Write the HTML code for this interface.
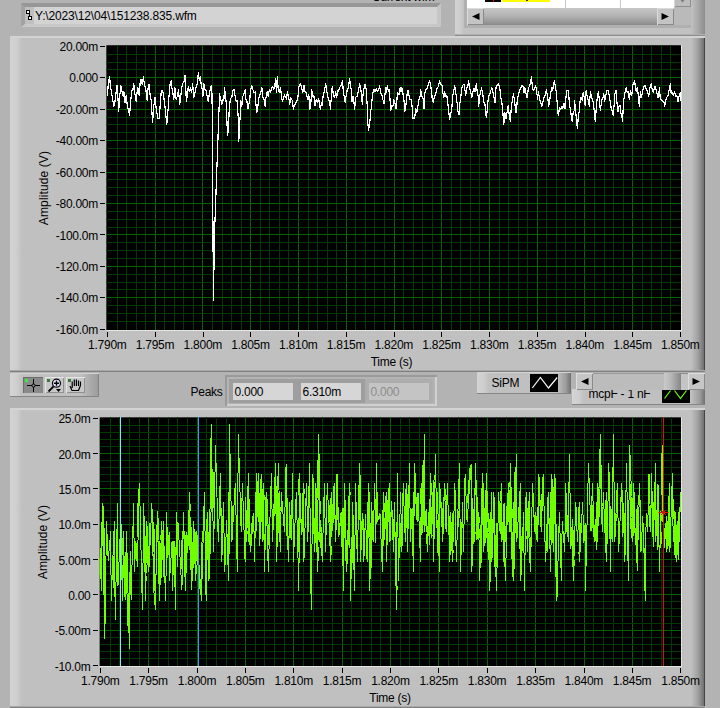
<!DOCTYPE html>
<html><head><meta charset="utf-8"><title>Waveform viewer</title>
<style>
html,body{margin:0;padding:0;}
body{width:720px;height:708px;overflow:hidden;background:#b3b3b3;font-family:"Liberation Sans", sans-serif;font-size:12px;color:#111;position:relative;}
.abs{position:absolute;}
.lbl{position:absolute;white-space:nowrap;line-height:14px;height:14px;font-size:12px;letter-spacing:-0.25px;color:#000;}
.r{text-align:right;}
.c{text-align:center;}
.panel{position:absolute;background:#c4c4c4;}
svg{position:absolute;left:0;top:0;}
</style></head><body>

<div class="abs" style="left:21px;top:3px;width:412px;height:17px;background:#d3d3d3;border-style:solid;border-width:4px 4px 3px 4px;border-color:#979797 #c6c6c6 #c8c8c8 #a2a2a2;"></div>
<div class="abs" style="left:25px;top:7px;width:9px;height:17px;background:#bfbfbf;"></div>
<svg width="40" height="30" style="left:0;top:0"><g fill="#fff" stroke="#000" stroke-width="1" shape-rendering="crispEdges"><rect x="26.5" y="10.5" width="3" height="3"/><rect x="28.5" y="16.5" width="3" height="3"/><path d="M29.500 14v2" fill="none"/></g></svg>
<div class="lbl" style="left:35px;top:9px;letter-spacing:-0.16px;">Y:\2023\12\04\151238.835.wfm</div>
<div class="lbl" style="left:372px;top:-10px;">Current wfm</div>

<div class="abs" style="left:455px;top:-12px;width:250px;height:48px;background:linear-gradient(90deg,#d3d3d3 0,#cecece 5px,#c2c2c2 9px,#c2c2c2 236px,#a8a8a8 243px,#8c8c8c 250px);box-shadow:inset 0 -1px 0 #8e8e8e, inset 0 -2px 0 #b0b0b0;"></div>
<div class="abs" style="left:464px;top:-6px;width:227px;height:34px;background:#b0b0b0;"></div>
<div class="abs" style="left:467px;top:0;width:224px;height:25px;background:#bababa;"></div>
<div class="abs" style="left:467px;top:0;width:207px;height:8px;background:#fff;"></div>
<div class="abs" style="left:485px;top:0;width:16px;height:2px;background:#000;"></div>
<div class="abs" style="left:493px;top:0;width:1px;height:2px;background:#e00;"></div>
<div class="abs" style="left:502px;top:0;width:48px;height:2px;background:#ffff00;"></div>
<div class="abs" style="left:526px;top:0;width:2px;height:1px;background:#333;"></div>
<div class="abs" style="left:565px;top:0;width:1px;height:8px;background:#c8c8c8;"></div>
<div class="abs" style="left:620px;top:0;width:1px;height:8px;background:#c8c8c8;"></div>
<div class="abs" style="left:674px;top:-4px;width:17px;height:11px;background:#bdbdbd;box-shadow:inset 1px 0 0 #d6d6d6, inset -1px -1px 0 #8e8e8e;"></div>
<div class="abs" style="left:467px;top:8px;width:207px;height:17px;background:linear-gradient(#c6c6c6,#b4b4b4 45%,#8a8a8a);"></div>
<div class="abs" style="left:467px;top:8px;width:17px;height:17px;background:#c4c4c4;box-shadow:inset 1px 1px 0 #dcdcdc, inset -1px -1px 0 #8a8a8a;"></div>
<div class="abs" style="left:657px;top:8px;width:17px;height:17px;background:#c4c4c4;box-shadow:inset 1px 1px 0 #dcdcdc, inset -1px -1px 0 #8a8a8a;"></div>
<svg width="720" height="40"><path d="M479.500 13v7l-7.500-3.500z M661.500 13v7l7.500-3.500z " fill="#000"/><path d="M680.500 0h4l-2 2.500z" fill="#7a7a7a"/></svg>

<div class="panel" style="left:10px;top:36px;width:695px;height:336px;background:linear-gradient(90deg,#d3d3d3 0,#cecece 7px,#c0c0c0 12px,#c0c0c0 681px,#a0a0a0 688px,#707070 694px,#444 694px,#444 695px);box-shadow:inset 0 2px 0 #d3d3d3, inset 0 -1px 0 #808080, inset 0 -2px 0 #a8a8a8;"></div>
<div class="panel" style="left:10px;top:408px;width:695px;height:300px;background:linear-gradient(90deg,#d3d3d3 0,#cecece 7px,#c0c0c0 12px,#c0c0c0 681px,#a0a0a0 688px,#707070 694px,#444 694px,#444 695px);box-shadow:inset 0 2px 0 #d3d3d3, inset 0 -1px 0 #808080, inset 0 -2px 0 #a8a8a8;"></div>
<div class="lbl r" style="left:28px;width:70px;top:39.8px;">20.00m</div>
<div class="abs" style="left:100px;top:46px;width:5px;height:1px;background:#000;"></div>
<div class="lbl r" style="left:28px;width:70px;top:71.2px;">0.000</div>
<div class="abs" style="left:100px;top:77px;width:5px;height:1px;background:#000;"></div>
<div class="lbl r" style="left:28px;width:70px;top:102.7px;">-20.00m</div>
<div class="abs" style="left:100px;top:109px;width:5px;height:1px;background:#000;"></div>
<div class="lbl r" style="left:28px;width:70px;top:134.1px;">-40.00m</div>
<div class="abs" style="left:100px;top:140px;width:5px;height:1px;background:#000;"></div>
<div class="lbl r" style="left:28px;width:70px;top:165.6px;">-60.00m</div>
<div class="abs" style="left:100px;top:172px;width:5px;height:1px;background:#000;"></div>
<div class="lbl r" style="left:28px;width:70px;top:197.0px;">-80.00m</div>
<div class="abs" style="left:100px;top:203px;width:5px;height:1px;background:#000;"></div>
<div class="lbl r" style="left:28px;width:70px;top:228.5px;">-100.0m</div>
<div class="abs" style="left:100px;top:234px;width:5px;height:1px;background:#000;"></div>
<div class="lbl r" style="left:28px;width:70px;top:259.9px;">-120.0m</div>
<div class="abs" style="left:100px;top:266px;width:5px;height:1px;background:#000;"></div>
<div class="lbl r" style="left:28px;width:70px;top:291.4px;">-140.0m</div>
<div class="abs" style="left:100px;top:297px;width:5px;height:1px;background:#000;"></div>
<div class="lbl r" style="left:28px;width:70px;top:322.8px;">-160.0m</div>
<div class="abs" style="left:100px;top:329px;width:5px;height:1px;background:#000;"></div>
<div class="lbl c" style="left:77.3px;width:60px;top:338px;">1.790m</div>
<div class="abs" style="left:107px;top:332px;width:1px;height:5px;background:#000;"></div>
<div class="lbl c" style="left:125.0px;width:60px;top:338px;">1.795m</div>
<div class="abs" style="left:155px;top:332px;width:1px;height:5px;background:#000;"></div>
<div class="lbl c" style="left:172.8px;width:60px;top:338px;">1.800m</div>
<div class="abs" style="left:203px;top:332px;width:1px;height:5px;background:#000;"></div>
<div class="lbl c" style="left:220.5px;width:60px;top:338px;">1.805m</div>
<div class="abs" style="left:250px;top:332px;width:1px;height:5px;background:#000;"></div>
<div class="lbl c" style="left:268.3px;width:60px;top:338px;">1.810m</div>
<div class="abs" style="left:298px;top:332px;width:1px;height:5px;background:#000;"></div>
<div class="lbl c" style="left:316.0px;width:60px;top:338px;">1.815m</div>
<div class="abs" style="left:346px;top:332px;width:1px;height:5px;background:#000;"></div>
<div class="lbl c" style="left:363.8px;width:60px;top:338px;">1.820m</div>
<div class="abs" style="left:394px;top:332px;width:1px;height:5px;background:#000;"></div>
<div class="lbl c" style="left:411.5px;width:60px;top:338px;">1.825m</div>
<div class="abs" style="left:441px;top:332px;width:1px;height:5px;background:#000;"></div>
<div class="lbl c" style="left:459.3px;width:60px;top:338px;">1.830m</div>
<div class="abs" style="left:489px;top:332px;width:1px;height:5px;background:#000;"></div>
<div class="lbl c" style="left:507.0px;width:60px;top:338px;">1.835m</div>
<div class="abs" style="left:537px;top:332px;width:1px;height:5px;background:#000;"></div>
<div class="lbl c" style="left:554.8px;width:60px;top:338px;">1.840m</div>
<div class="abs" style="left:585px;top:332px;width:1px;height:5px;background:#000;"></div>
<div class="lbl c" style="left:602.5px;width:60px;top:338px;">1.845m</div>
<div class="abs" style="left:632px;top:332px;width:1px;height:5px;background:#000;"></div>
<div class="lbl c" style="left:650.3px;width:60px;top:338px;">1.850m</div>
<div class="abs" style="left:680px;top:332px;width:1px;height:5px;background:#000;"></div>
<div class="lbl c" style="left:351.5px;width:80px;top:355px;">Time (s)</div>
<div class="lbl r" style="left:20.5px;width:70px;top:412.3px;">25.0m</div>
<div class="abs" style="left:93px;top:418px;width:5px;height:1px;background:#000;"></div>
<div class="lbl r" style="left:20.5px;width:70px;top:447.6px;">20.0m</div>
<div class="abs" style="left:93px;top:453px;width:5px;height:1px;background:#000;"></div>
<div class="lbl r" style="left:20.5px;width:70px;top:482.9px;">15.0m</div>
<div class="abs" style="left:93px;top:488px;width:5px;height:1px;background:#000;"></div>
<div class="lbl r" style="left:20.5px;width:70px;top:518.2px;">10.0m</div>
<div class="abs" style="left:93px;top:524px;width:5px;height:1px;background:#000;"></div>
<div class="lbl r" style="left:20.5px;width:70px;top:553.6px;">5.00m</div>
<div class="abs" style="left:93px;top:559px;width:5px;height:1px;background:#000;"></div>
<div class="lbl r" style="left:20.5px;width:70px;top:588.9px;">0.00</div>
<div class="abs" style="left:93px;top:594px;width:5px;height:1px;background:#000;"></div>
<div class="lbl r" style="left:20.5px;width:70px;top:624.2px;">-5.00m</div>
<div class="abs" style="left:93px;top:630px;width:5px;height:1px;background:#000;"></div>
<div class="lbl r" style="left:20.5px;width:70px;top:659.5px;">-10.0m</div>
<div class="abs" style="left:93px;top:665px;width:5px;height:1px;background:#000;"></div>
<div class="lbl c" style="left:70.3px;width:60px;top:674px;">1.790m</div>
<div class="abs" style="left:100px;top:668px;width:1px;height:5px;background:#000;"></div>
<div class="lbl c" style="left:118.6px;width:60px;top:674px;">1.795m</div>
<div class="abs" style="left:148px;top:668px;width:1px;height:5px;background:#000;"></div>
<div class="lbl c" style="left:167.0px;width:60px;top:674px;">1.800m</div>
<div class="abs" style="left:197px;top:668px;width:1px;height:5px;background:#000;"></div>
<div class="lbl c" style="left:215.3px;width:60px;top:674px;">1.805m</div>
<div class="abs" style="left:245px;top:668px;width:1px;height:5px;background:#000;"></div>
<div class="lbl c" style="left:263.7px;width:60px;top:674px;">1.810m</div>
<div class="abs" style="left:293px;top:668px;width:1px;height:5px;background:#000;"></div>
<div class="lbl c" style="left:312.0px;width:60px;top:674px;">1.815m</div>
<div class="abs" style="left:342px;top:668px;width:1px;height:5px;background:#000;"></div>
<div class="lbl c" style="left:360.4px;width:60px;top:674px;">1.820m</div>
<div class="abs" style="left:390px;top:668px;width:1px;height:5px;background:#000;"></div>
<div class="lbl c" style="left:408.7px;width:60px;top:674px;">1.825m</div>
<div class="abs" style="left:438px;top:668px;width:1px;height:5px;background:#000;"></div>
<div class="lbl c" style="left:457.1px;width:60px;top:674px;">1.830m</div>
<div class="abs" style="left:487px;top:668px;width:1px;height:5px;background:#000;"></div>
<div class="lbl c" style="left:505.4px;width:60px;top:674px;">1.835m</div>
<div class="abs" style="left:535px;top:668px;width:1px;height:5px;background:#000;"></div>
<div class="lbl c" style="left:553.8px;width:60px;top:674px;">1.840m</div>
<div class="abs" style="left:584px;top:668px;width:1px;height:5px;background:#000;"></div>
<div class="lbl c" style="left:602.1px;width:60px;top:674px;">1.845m</div>
<div class="abs" style="left:632px;top:668px;width:1px;height:5px;background:#000;"></div>
<div class="lbl c" style="left:650.5px;width:60px;top:674px;">1.850m</div>
<div class="abs" style="left:680px;top:668px;width:1px;height:5px;background:#000;"></div>
<div class="lbl c" style="left:350.1px;width:80px;top:691px;">Time (s)</div>
<div class="lbl c" style="left:-6.299999999999997px;top:181.3px;width:100px;transform:rotate(-90deg);letter-spacing:0.12px;">Amplitude (V)</div>
<div class="lbl c" style="left:-7px;top:534.9px;width:100px;transform:rotate(-90deg);letter-spacing:0.12px;">Amplitude (V)</div>
<svg width="720" height="708" viewBox="0 0 720 708">
<rect x="106.3" y="45.2" width="575.7" height="285.8" fill="#e4e4e4"/>
<rect x="106.3" y="45.2" width="574.7" height="284.8" fill="#000"/>
<g shape-rendering="crispEdges" stroke-width="1"><line x1="117.5" y1="45.2" x2="117.5" y2="330" stroke="#003a00"/>
<line x1="126.5" y1="45.2" x2="126.5" y2="330" stroke="#003a00"/>
<line x1="136.5" y1="45.2" x2="136.5" y2="330" stroke="#003a00"/>
<line x1="145.5" y1="45.2" x2="145.5" y2="330" stroke="#003a00"/>
<line x1="155.5" y1="45.2" x2="155.5" y2="330" stroke="#006400"/>
<line x1="164.5" y1="45.2" x2="164.5" y2="330" stroke="#003a00"/>
<line x1="174.5" y1="45.2" x2="174.5" y2="330" stroke="#003a00"/>
<line x1="183.5" y1="45.2" x2="183.5" y2="330" stroke="#003a00"/>
<line x1="193.5" y1="45.2" x2="193.5" y2="330" stroke="#003a00"/>
<line x1="202.5" y1="45.2" x2="202.5" y2="330" stroke="#006400"/>
<line x1="212.5" y1="45.2" x2="212.5" y2="330" stroke="#003a00"/>
<line x1="222.5" y1="45.2" x2="222.5" y2="330" stroke="#003a00"/>
<line x1="231.5" y1="45.2" x2="231.5" y2="330" stroke="#003a00"/>
<line x1="241.5" y1="45.2" x2="241.5" y2="330" stroke="#003a00"/>
<line x1="250.5" y1="45.2" x2="250.5" y2="330" stroke="#006400"/>
<line x1="260.5" y1="45.2" x2="260.5" y2="330" stroke="#003a00"/>
<line x1="269.5" y1="45.2" x2="269.5" y2="330" stroke="#003a00"/>
<line x1="279.5" y1="45.2" x2="279.5" y2="330" stroke="#003a00"/>
<line x1="288.5" y1="45.2" x2="288.5" y2="330" stroke="#003a00"/>
<line x1="298.5" y1="45.2" x2="298.5" y2="330" stroke="#006400"/>
<line x1="308.5" y1="45.2" x2="308.5" y2="330" stroke="#003a00"/>
<line x1="317.5" y1="45.2" x2="317.5" y2="330" stroke="#003a00"/>
<line x1="327.5" y1="45.2" x2="327.5" y2="330" stroke="#003a00"/>
<line x1="336.5" y1="45.2" x2="336.5" y2="330" stroke="#003a00"/>
<line x1="346.5" y1="45.2" x2="346.5" y2="330" stroke="#006400"/>
<line x1="355.5" y1="45.2" x2="355.5" y2="330" stroke="#003a00"/>
<line x1="365.5" y1="45.2" x2="365.5" y2="330" stroke="#003a00"/>
<line x1="374.5" y1="45.2" x2="374.5" y2="330" stroke="#003a00"/>
<line x1="384.5" y1="45.2" x2="384.5" y2="330" stroke="#003a00"/>
<line x1="394.5" y1="45.2" x2="394.5" y2="330" stroke="#006400"/>
<line x1="403.5" y1="45.2" x2="403.5" y2="330" stroke="#003a00"/>
<line x1="413.5" y1="45.2" x2="413.5" y2="330" stroke="#003a00"/>
<line x1="422.5" y1="45.2" x2="422.5" y2="330" stroke="#003a00"/>
<line x1="432.5" y1="45.2" x2="432.5" y2="330" stroke="#003a00"/>
<line x1="441.5" y1="45.2" x2="441.5" y2="330" stroke="#006400"/>
<line x1="451.5" y1="45.2" x2="451.5" y2="330" stroke="#003a00"/>
<line x1="460.5" y1="45.2" x2="460.5" y2="330" stroke="#003a00"/>
<line x1="470.5" y1="45.2" x2="470.5" y2="330" stroke="#003a00"/>
<line x1="479.5" y1="45.2" x2="479.5" y2="330" stroke="#003a00"/>
<line x1="489.5" y1="45.2" x2="489.5" y2="330" stroke="#006400"/>
<line x1="499.5" y1="45.2" x2="499.5" y2="330" stroke="#003a00"/>
<line x1="508.5" y1="45.2" x2="508.5" y2="330" stroke="#003a00"/>
<line x1="518.5" y1="45.2" x2="518.5" y2="330" stroke="#003a00"/>
<line x1="527.5" y1="45.2" x2="527.5" y2="330" stroke="#003a00"/>
<line x1="537.5" y1="45.2" x2="537.5" y2="330" stroke="#006400"/>
<line x1="546.5" y1="45.2" x2="546.5" y2="330" stroke="#003a00"/>
<line x1="556.5" y1="45.2" x2="556.5" y2="330" stroke="#003a00"/>
<line x1="565.5" y1="45.2" x2="565.5" y2="330" stroke="#003a00"/>
<line x1="575.5" y1="45.2" x2="575.5" y2="330" stroke="#003a00"/>
<line x1="584.5" y1="45.2" x2="584.5" y2="330" stroke="#006400"/>
<line x1="594.5" y1="45.2" x2="594.5" y2="330" stroke="#003a00"/>
<line x1="604.5" y1="45.2" x2="604.5" y2="330" stroke="#003a00"/>
<line x1="613.5" y1="45.2" x2="613.5" y2="330" stroke="#003a00"/>
<line x1="623.5" y1="45.2" x2="623.5" y2="330" stroke="#003a00"/>
<line x1="632.5" y1="45.2" x2="632.5" y2="330" stroke="#006400"/>
<line x1="642.5" y1="45.2" x2="642.5" y2="330" stroke="#003a00"/>
<line x1="651.5" y1="45.2" x2="651.5" y2="330" stroke="#003a00"/>
<line x1="661.5" y1="45.2" x2="661.5" y2="330" stroke="#003a00"/>
<line x1="670.5" y1="45.2" x2="670.5" y2="330" stroke="#003a00"/>
<line x1="106.3" y1="54.5" x2="681" y2="54.5" stroke="#003a00"/>
<line x1="106.3" y1="62.5" x2="681" y2="62.5" stroke="#003a00"/>
<line x1="106.3" y1="69.5" x2="681" y2="69.5" stroke="#003a00"/>
<line x1="106.3" y1="77.5" x2="681" y2="77.5" stroke="#006400"/>
<line x1="106.3" y1="85.5" x2="681" y2="85.5" stroke="#003a00"/>
<line x1="106.3" y1="93.5" x2="681" y2="93.5" stroke="#003a00"/>
<line x1="106.3" y1="101.5" x2="681" y2="101.5" stroke="#003a00"/>
<line x1="106.3" y1="109.5" x2="681" y2="109.5" stroke="#006400"/>
<line x1="106.3" y1="117.5" x2="681" y2="117.5" stroke="#003a00"/>
<line x1="106.3" y1="124.5" x2="681" y2="124.5" stroke="#003a00"/>
<line x1="106.3" y1="132.5" x2="681" y2="132.5" stroke="#003a00"/>
<line x1="106.3" y1="140.5" x2="681" y2="140.5" stroke="#006400"/>
<line x1="106.3" y1="148.5" x2="681" y2="148.5" stroke="#003a00"/>
<line x1="106.3" y1="156.5" x2="681" y2="156.5" stroke="#003a00"/>
<line x1="106.3" y1="164.5" x2="681" y2="164.5" stroke="#003a00"/>
<line x1="106.3" y1="172.5" x2="681" y2="172.5" stroke="#006400"/>
<line x1="106.3" y1="179.5" x2="681" y2="179.5" stroke="#003a00"/>
<line x1="106.3" y1="187.5" x2="681" y2="187.5" stroke="#003a00"/>
<line x1="106.3" y1="195.5" x2="681" y2="195.5" stroke="#003a00"/>
<line x1="106.3" y1="203.5" x2="681" y2="203.5" stroke="#006400"/>
<line x1="106.3" y1="211.5" x2="681" y2="211.5" stroke="#003a00"/>
<line x1="106.3" y1="219.5" x2="681" y2="219.5" stroke="#003a00"/>
<line x1="106.3" y1="227.5" x2="681" y2="227.5" stroke="#003a00"/>
<line x1="106.3" y1="234.5" x2="681" y2="234.5" stroke="#006400"/>
<line x1="106.3" y1="242.5" x2="681" y2="242.5" stroke="#003a00"/>
<line x1="106.3" y1="250.5" x2="681" y2="250.5" stroke="#003a00"/>
<line x1="106.3" y1="258.5" x2="681" y2="258.5" stroke="#003a00"/>
<line x1="106.3" y1="266.5" x2="681" y2="266.5" stroke="#006400"/>
<line x1="106.3" y1="274.5" x2="681" y2="274.5" stroke="#003a00"/>
<line x1="106.3" y1="282.5" x2="681" y2="282.5" stroke="#003a00"/>
<line x1="106.3" y1="289.5" x2="681" y2="289.5" stroke="#003a00"/>
<line x1="106.3" y1="297.5" x2="681" y2="297.5" stroke="#006400"/>
<line x1="106.3" y1="305.5" x2="681" y2="305.5" stroke="#003a00"/>
<line x1="106.3" y1="313.5" x2="681" y2="313.5" stroke="#003a00"/>
<line x1="106.3" y1="321.5" x2="681" y2="321.5" stroke="#003a00"/></g>
<polyline points="107.3,96.2 108.4,82.9 109.6,76.8 110.4,86.2 111.6,92.9 112.7,99.6 113.8,106.2 114.9,101.8 116.0,92.9 117.1,85.1 117.9,97.3 118.7,111.2 119.6,97.3 120.9,85.7 121.8,90.7 123.1,96.2 124.0,91.8 125.1,102.9 126.2,95.1 127.3,106.2 128.2,109.6 129.6,115.1 130.7,100.7 131.8,90.7 132.9,89.6 133.8,84.0 134.6,91.8 136.2,101.8 137.1,91.8 137.9,87.9 139.3,95.7 140.1,82.9 141.2,79.0 142.3,84.6 143.4,76.8 144.6,85.7 145.7,88.4 147.1,100.1 147.9,89.6 149.0,84.0 149.8,92.9 151.2,100.7 152.6,122.3 153.7,107.3 154.9,97.3 156.2,108.4 157.9,119.0 159.2,118.4 160.1,106.2 161.2,91.8 162.1,90.1 163.4,94.0 164.9,106.2 166.0,117.3 166.8,124.6 167.9,111.8 169.0,96.2 170.1,84.0 171.2,80.7 172.0,88.4 172.9,92.9 173.8,99.6 174.9,87.9 176.2,99.6 177.3,96.2 178.4,90.1 179.8,104.0 180.9,95.1 182.0,86.2 183.4,81.8 184.0,81.8 184.9,75.1 185.7,86.2 186.4,101.8 187.6,91.8 188.4,86.2 189.3,91.8 190.4,87.9 191.6,92.9 192.7,84.0 193.8,97.3 194.9,92.9 196.0,87.3 197.1,84.0 198.4,72.9 199.3,80.7 200.4,76.8 201.2,85.1 202.3,89.6 202.9,96.2 203.8,84.0 205.1,89.6 206.2,90.7 207.1,96.2 208.2,101.8 209.3,94.0 210.4,88.4 211.3,85.7 212.0,94.0 212.3,119.6 213.4,300.0 214.6,230.7 218.8,115.1 219.6,94.0 220.7,99.6 221.8,104.0 223.1,99.6 223.8,100.7 224.6,87.3 225.3,95.1 226.2,102.9 227.1,126.2 227.7,135.1 228.4,128.4 229.3,108.4 230.4,98.4 231.8,97.3 232.9,90.7 234.0,89.6 235.1,96.2 236.2,101.8 237.1,100.7 238.2,117.3 238.8,141.4 239.3,130.7 240.1,117.3 240.9,100.7 241.8,106.2 242.9,96.2 244.0,94.0 245.1,89.6 246.0,99.6 246.8,100.7 247.9,109.0 249.6,100.7 250.7,89.6 251.8,85.7 252.9,89.6 254.0,92.9 255.1,91.8 256.0,105.1 256.8,112.9 257.9,106.2 259.0,97.3 260.7,92.9 261.8,87.3 262.9,97.3 264.0,99.6 265.1,106.2 266.0,97.3 267.1,91.8 268.2,96.2 269.3,89.6 270.4,92.9 271.6,87.9 272.7,86.2 273.8,89.6 274.9,85.1 275.7,78.4 276.4,92.9 277.3,76.8 278.2,89.6 279.3,92.9 280.4,87.9 281.6,96.2 282.3,101.8 283.4,98.4 284.6,95.1 285.7,97.3 286.6,99.6 287.3,91.8 288.4,96.2 289.8,104.0 290.7,97.3 292.3,100.7 293.4,109.0 294.6,105.1 295.7,102.9 296.8,101.8 297.9,97.3 299.0,86.2 300.4,83.4 301.8,88.4 302.7,92.9 304.0,85.7 305.1,91.8 306.2,92.9 307.9,99.6 308.8,94.6 309.8,109.0 310.7,106.2 311.6,89.6 312.7,96.2 313.8,95.1 315.1,105.7 316.2,99.6 317.3,102.3 318.7,98.4 319.6,105.1 320.4,109.0 321.6,102.9 322.3,105.1 323.1,96.2 324.6,89.6 325.7,84.0 326.8,91.8 328.4,99.6 329.6,101.8 330.4,109.0 331.4,96.2 332.3,86.2 333.4,95.1 334.6,97.3 335.7,91.8 336.8,97.3 337.3,90.7 338.4,91.8 339.6,87.9 341.2,85.1 342.6,80.7 343.4,94.0 344.0,95.1 345.1,102.3 346.2,95.1 347.3,89.6 348.4,88.4 349.6,78.4 350.4,86.2 351.6,90.7 352.0,101.8 352.9,96.2 353.8,100.7 354.6,109.0 355.7,97.3 357.1,96.2 358.2,91.8 359.6,84.0 360.7,88.4 361.6,95.1 362.3,104.0 363.4,90.7 365.1,84.0 366.2,89.6 367.1,104.0 367.9,124.0 368.7,130.1 369.8,121.8 370.9,110.7 371.8,101.8 372.9,92.9 374.0,89.6 375.1,91.8 376.2,88.4 377.3,91.8 378.4,90.7 379.6,85.7 380.7,92.9 381.8,94.0 382.9,99.6 384.0,104.0 384.9,95.1 385.7,87.9 386.4,92.9 387.3,85.7 388.4,91.8 389.3,89.6 390.1,100.7 390.7,110.7 391.8,105.1 392.9,106.2 393.8,99.6 394.9,102.9 396.2,109.0 397.1,97.3 397.9,92.9 399.0,95.1 400.1,87.9 400.9,91.8 401.8,87.9 402.9,92.9 404.0,100.7 404.9,111.2 406.0,104.0 406.8,96.2 407.9,90.1 409.0,95.1 410.1,99.6 411.2,99.6 412.3,108.4 413.1,119.0 414.6,118.4 415.7,108.4 416.8,112.9 417.9,106.2 419.0,99.6 420.1,96.2 420.7,89.6 421.8,96.2 423.1,98.4 424.0,109.0 424.9,92.9 426.0,89.6 427.3,87.9 428.4,84.0 429.6,80.7 430.7,86.2 431.6,91.8 432.3,99.6 433.1,102.3 434.2,97.3 435.7,94.0 437.1,88.4 438.4,86.2 439.6,80.7 440.7,84.0 442.0,85.1 442.9,92.9 443.8,97.3 444.6,91.8 445.7,96.2 446.8,95.1 447.9,104.0 448.7,111.8 449.8,119.0 450.9,112.9 451.8,108.4 452.7,96.2 453.8,90.7 454.6,85.7 455.7,91.8 456.8,100.7 457.9,110.7 459.0,115.1 459.8,104.0 460.9,96.2 461.8,87.9 462.9,85.1 464.0,84.0 464.9,89.6 465.7,95.1 466.8,87.9 467.9,85.7 468.7,80.7 469.6,88.4 470.7,91.8 471.8,97.3 472.9,91.8 474.0,88.4 475.1,91.8 476.2,84.0 477.3,91.8 478.1,96.2 478.7,106.2 479.6,96.2 480.7,91.8 481.6,87.9 482.7,94.0 483.8,101.8 484.9,104.0 485.7,112.9 486.4,117.3 487.6,106.2 488.4,96.2 489.8,94.0 490.7,90.7 491.8,87.9 492.9,91.8 494.0,97.3 495.1,102.9 496.0,87.3 497.3,84.6 498.7,84.0 499.8,87.9 500.7,97.3 501.8,101.8 502.9,112.9 503.8,124.6 504.0,121.8 504.9,112.9 506.0,118.4 507.1,111.8 508.2,105.1 509.0,112.9 510.4,121.8 511.2,108.4 512.3,100.7 513.4,94.0 514.6,100.7 515.7,111.8 516.4,112.9 517.3,99.6 518.4,95.1 519.6,90.7 520.7,88.4 521.8,85.7 523.1,86.2 524.0,92.9 524.9,87.9 526.0,94.0 527.1,97.9 528.2,89.6 529.6,85.1 530.7,82.9 531.4,76.8 532.3,86.2 533.4,90.7 534.6,87.9 535.7,85.7 536.8,92.9 537.6,99.6 538.4,91.8 539.6,98.4 540.7,102.9 541.8,106.2 542.9,101.8 544.0,97.3 545.3,95.1 546.4,90.1 547.6,96.2 548.7,106.2 549.6,101.8 550.4,95.1 551.6,87.9 552.7,90.7 553.4,84.0 554.6,80.7 555.3,87.3 556.2,91.8 557.1,101.8 557.9,112.9 558.4,115.1 559.6,107.3 560.7,109.6 561.8,106.2 562.9,108.4 564.0,103.4 565.1,108.4 566.0,97.3 566.8,90.1 568.4,90.1 569.3,101.8 570.4,110.7 571.6,117.3 572.3,121.8 573.1,112.9 574.2,110.7 574.6,100.7 575.7,111.8 576.8,121.8 577.3,128.4 578.2,118.4 579.3,110.7 580.1,100.7 581.2,97.3 582.3,100.7 583.1,92.9 584.0,96.2 585.1,105.1 586.2,90.1 587.3,97.3 588.4,100.7 589.3,106.2 590.4,91.8 591.6,97.3 592.9,100.7 594.0,108.4 595.3,121.8 596.2,108.4 597.3,97.3 598.4,91.8 599.3,99.6 600.4,110.7 601.6,100.7 602.7,98.4 603.8,94.0 604.6,101.8 605.7,96.2 606.8,90.1 607.9,90.1 609.0,94.0 610.1,100.7 611.2,108.4 612.3,111.8 613.1,115.1 614.0,106.2 614.9,94.0 616.2,90.1 616.8,100.7 617.9,111.8 619.0,106.2 620.1,105.1 620.9,112.9 621.8,115.1 622.6,121.8 623.4,102.9 624.6,94.0 626.2,87.9 627.3,92.9 628.4,91.8 629.3,99.6 630.4,90.7 631.8,95.1 632.9,85.1 634.6,80.7 635.3,86.2 636.2,91.8 637.1,87.9 638.2,94.0 639.3,106.2 640.4,91.8 641.6,97.3 642.7,90.7 644.0,86.2 645.3,85.7 646.4,89.6 647.6,91.8 648.7,96.2 649.8,87.9 651.2,84.0 652.3,89.6 653.4,92.9 654.6,86.2 655.7,87.9 656.8,92.9 657.9,97.9 658.7,94.0 659.6,87.3 660.1,97.3 661.2,99.6 662.3,100.7 664.0,102.3 664.6,106.2 665.7,100.7 666.8,97.3 667.9,96.2 669.0,90.7 670.4,84.0 671.2,94.0 672.3,92.9 673.4,95.1 674.6,91.8 675.7,96.2 676.8,95.1 677.9,101.8 679.0,96.2 680.1,92.9 680.9,100.7" fill="none" stroke="#ffffff" stroke-width="1.2" stroke-linejoin="round" shape-rendering="crispEdges"/>
<rect x="99.6" y="417.3" width="582.4" height="249.7" fill="#e4e4e4"/>
<rect x="99.6" y="417.3" width="581.4" height="248.7" fill="#000"/>
<g shape-rendering="crispEdges" stroke-width="1"><line x1="110.5" y1="417.3" x2="110.5" y2="666" stroke="#003a00"/>
<line x1="119.5" y1="417.3" x2="119.5" y2="666" stroke="#003a00"/>
<line x1="129.5" y1="417.3" x2="129.5" y2="666" stroke="#003a00"/>
<line x1="139.5" y1="417.3" x2="139.5" y2="666" stroke="#003a00"/>
<line x1="148.5" y1="417.3" x2="148.5" y2="666" stroke="#006400"/>
<line x1="158.5" y1="417.3" x2="158.5" y2="666" stroke="#003a00"/>
<line x1="168.5" y1="417.3" x2="168.5" y2="666" stroke="#003a00"/>
<line x1="177.5" y1="417.3" x2="177.5" y2="666" stroke="#003a00"/>
<line x1="187.5" y1="417.3" x2="187.5" y2="666" stroke="#003a00"/>
<line x1="197.5" y1="417.3" x2="197.5" y2="666" stroke="#006400"/>
<line x1="206.5" y1="417.3" x2="206.5" y2="666" stroke="#003a00"/>
<line x1="216.5" y1="417.3" x2="216.5" y2="666" stroke="#003a00"/>
<line x1="226.5" y1="417.3" x2="226.5" y2="666" stroke="#003a00"/>
<line x1="235.5" y1="417.3" x2="235.5" y2="666" stroke="#003a00"/>
<line x1="245.5" y1="417.3" x2="245.5" y2="666" stroke="#006400"/>
<line x1="255.5" y1="417.3" x2="255.5" y2="666" stroke="#003a00"/>
<line x1="264.5" y1="417.3" x2="264.5" y2="666" stroke="#003a00"/>
<line x1="274.5" y1="417.3" x2="274.5" y2="666" stroke="#003a00"/>
<line x1="284.5" y1="417.3" x2="284.5" y2="666" stroke="#003a00"/>
<line x1="293.5" y1="417.3" x2="293.5" y2="666" stroke="#006400"/>
<line x1="303.5" y1="417.3" x2="303.5" y2="666" stroke="#003a00"/>
<line x1="313.5" y1="417.3" x2="313.5" y2="666" stroke="#003a00"/>
<line x1="322.5" y1="417.3" x2="322.5" y2="666" stroke="#003a00"/>
<line x1="332.5" y1="417.3" x2="332.5" y2="666" stroke="#003a00"/>
<line x1="342.5" y1="417.3" x2="342.5" y2="666" stroke="#006400"/>
<line x1="351.5" y1="417.3" x2="351.5" y2="666" stroke="#003a00"/>
<line x1="361.5" y1="417.3" x2="361.5" y2="666" stroke="#003a00"/>
<line x1="371.5" y1="417.3" x2="371.5" y2="666" stroke="#003a00"/>
<line x1="380.5" y1="417.3" x2="380.5" y2="666" stroke="#003a00"/>
<line x1="390.5" y1="417.3" x2="390.5" y2="666" stroke="#006400"/>
<line x1="400.5" y1="417.3" x2="400.5" y2="666" stroke="#003a00"/>
<line x1="409.5" y1="417.3" x2="409.5" y2="666" stroke="#003a00"/>
<line x1="419.5" y1="417.3" x2="419.5" y2="666" stroke="#003a00"/>
<line x1="429.5" y1="417.3" x2="429.5" y2="666" stroke="#003a00"/>
<line x1="438.5" y1="417.3" x2="438.5" y2="666" stroke="#006400"/>
<line x1="448.5" y1="417.3" x2="448.5" y2="666" stroke="#003a00"/>
<line x1="458.5" y1="417.3" x2="458.5" y2="666" stroke="#003a00"/>
<line x1="467.5" y1="417.3" x2="467.5" y2="666" stroke="#003a00"/>
<line x1="477.5" y1="417.3" x2="477.5" y2="666" stroke="#003a00"/>
<line x1="487.5" y1="417.3" x2="487.5" y2="666" stroke="#006400"/>
<line x1="496.5" y1="417.3" x2="496.5" y2="666" stroke="#003a00"/>
<line x1="506.5" y1="417.3" x2="506.5" y2="666" stroke="#003a00"/>
<line x1="516.5" y1="417.3" x2="516.5" y2="666" stroke="#003a00"/>
<line x1="525.5" y1="417.3" x2="525.5" y2="666" stroke="#003a00"/>
<line x1="535.5" y1="417.3" x2="535.5" y2="666" stroke="#006400"/>
<line x1="545.5" y1="417.3" x2="545.5" y2="666" stroke="#003a00"/>
<line x1="554.5" y1="417.3" x2="554.5" y2="666" stroke="#003a00"/>
<line x1="564.5" y1="417.3" x2="564.5" y2="666" stroke="#003a00"/>
<line x1="574.5" y1="417.3" x2="574.5" y2="666" stroke="#003a00"/>
<line x1="584.5" y1="417.3" x2="584.5" y2="666" stroke="#006400"/>
<line x1="593.5" y1="417.3" x2="593.5" y2="666" stroke="#003a00"/>
<line x1="603.5" y1="417.3" x2="603.5" y2="666" stroke="#003a00"/>
<line x1="613.5" y1="417.3" x2="613.5" y2="666" stroke="#003a00"/>
<line x1="622.5" y1="417.3" x2="622.5" y2="666" stroke="#003a00"/>
<line x1="632.5" y1="417.3" x2="632.5" y2="666" stroke="#006400"/>
<line x1="642.5" y1="417.3" x2="642.5" y2="666" stroke="#003a00"/>
<line x1="651.5" y1="417.3" x2="651.5" y2="666" stroke="#003a00"/>
<line x1="661.5" y1="417.3" x2="661.5" y2="666" stroke="#003a00"/>
<line x1="671.5" y1="417.3" x2="671.5" y2="666" stroke="#003a00"/>
<line x1="99.6" y1="425.5" x2="681" y2="425.5" stroke="#003a00"/>
<line x1="99.6" y1="432.5" x2="681" y2="432.5" stroke="#003a00"/>
<line x1="99.6" y1="439.5" x2="681" y2="439.5" stroke="#003a00"/>
<line x1="99.6" y1="446.5" x2="681" y2="446.5" stroke="#003a00"/>
<line x1="99.6" y1="453.5" x2="681" y2="453.5" stroke="#006400"/>
<line x1="99.6" y1="460.5" x2="681" y2="460.5" stroke="#003a00"/>
<line x1="99.6" y1="467.5" x2="681" y2="467.5" stroke="#003a00"/>
<line x1="99.6" y1="474.5" x2="681" y2="474.5" stroke="#003a00"/>
<line x1="99.6" y1="481.5" x2="681" y2="481.5" stroke="#003a00"/>
<line x1="99.6" y1="488.5" x2="681" y2="488.5" stroke="#006400"/>
<line x1="99.6" y1="495.5" x2="681" y2="495.5" stroke="#003a00"/>
<line x1="99.6" y1="503.5" x2="681" y2="503.5" stroke="#003a00"/>
<line x1="99.6" y1="510.5" x2="681" y2="510.5" stroke="#003a00"/>
<line x1="99.6" y1="517.5" x2="681" y2="517.5" stroke="#003a00"/>
<line x1="99.6" y1="524.5" x2="681" y2="524.5" stroke="#006400"/>
<line x1="99.6" y1="531.5" x2="681" y2="531.5" stroke="#003a00"/>
<line x1="99.6" y1="538.5" x2="681" y2="538.5" stroke="#003a00"/>
<line x1="99.6" y1="545.5" x2="681" y2="545.5" stroke="#003a00"/>
<line x1="99.6" y1="552.5" x2="681" y2="552.5" stroke="#003a00"/>
<line x1="99.6" y1="559.5" x2="681" y2="559.5" stroke="#006400"/>
<line x1="99.6" y1="566.5" x2="681" y2="566.5" stroke="#003a00"/>
<line x1="99.6" y1="573.5" x2="681" y2="573.5" stroke="#003a00"/>
<line x1="99.6" y1="580.5" x2="681" y2="580.5" stroke="#003a00"/>
<line x1="99.6" y1="587.5" x2="681" y2="587.5" stroke="#003a00"/>
<line x1="99.6" y1="594.5" x2="681" y2="594.5" stroke="#006400"/>
<line x1="99.6" y1="601.5" x2="681" y2="601.5" stroke="#003a00"/>
<line x1="99.6" y1="608.5" x2="681" y2="608.5" stroke="#003a00"/>
<line x1="99.6" y1="616.5" x2="681" y2="616.5" stroke="#003a00"/>
<line x1="99.6" y1="623.5" x2="681" y2="623.5" stroke="#003a00"/>
<line x1="99.6" y1="630.5" x2="681" y2="630.5" stroke="#006400"/>
<line x1="99.6" y1="637.5" x2="681" y2="637.5" stroke="#003a00"/>
<line x1="99.6" y1="644.5" x2="681" y2="644.5" stroke="#003a00"/>
<line x1="99.6" y1="651.5" x2="681" y2="651.5" stroke="#003a00"/>
<line x1="99.6" y1="658.5" x2="681" y2="658.5" stroke="#003a00"/></g>
<clipPath id="bc"><rect x="99.6" y="417.3" width="581.4" height="248.7"/></clipPath>
<g clip-path="url(#bc)"><polyline points="100.3,548.0 101.4,590.1 102.2,503.1 103.1,550.6 103.9,512.4 104.8,638.4 106.5,521.7 108.2,560.4 110.7,531.9 111.2,600.2 114.4,521.7 115.3,619.8 117.5,503.1 118.0,585.9 120.9,518.3 122.6,600.2 123.4,531.9 125.1,600.2 126.5,531.9 129.4,648.6 130.2,551.4 131.1,600.2 133.6,503.1 134.4,571.4 135.9,541.3 137.3,566.4 139.5,483.6 142.4,609.6 143.8,503.1 145.5,600.2 146.6,521.7 148.8,571.4 151.9,503.1 152.9,555.8 153.9,522.5 155.3,609.6 157.3,511.5 159.4,600.2 161.6,521.7 162.4,559.2 163.2,521.7 165.8,600.2 166.6,512.4 167.9,557.4 169.2,531.9 169.5,580.8 172.1,541.2 172.6,590.1 174.0,540.8 175.5,609.6 176.3,512.4 177.2,566.8 178.0,522.5 181.9,590.1 183.6,512.4 185.3,590.1 186.1,531.9 187.8,552.4 189.5,492.9 190.2,569.8 190.9,517.5 191.2,590.1 193.8,521.7 195.5,580.8 196.8,531.9 201.4,600.9 204.4,492.6 206.1,600.9 207.6,512.5 209.0,580.5 211.2,424.8 213.6,551.7 215.5,445.1 218.3,541.5 220.4,473.9 221.7,561.9 223.4,502.8 224.8,571.2 226.6,520.9 228.5,580.5 229.4,424.8 231.9,541.5 235.3,483.2 237.3,571.2 238.3,434.9 241.2,531.4 242.4,483.2 245.1,561.9 245.5,497.7 246.9,533.0 248.3,473.9 248.6,541.5 249.4,519.2 250.5,551.7 253.9,512.9 254.2,561.9 256.5,473.9 258.2,522.0 258.7,473.9 259.9,545.6 261.1,473.9 262.4,541.5 263.2,483.2 264.6,571.2 266.1,492.6 268.3,571.2 271.4,473.9 272.6,541.5 275.5,463.8 276.5,561.9 278.5,463.8 280.2,551.7 281.4,492.6 284.4,531.4 286.1,463.8 288.7,561.9 289.5,502.8 291.1,540.0 292.6,473.9 293.4,561.9 296.3,492.6 298.9,590.7 299.4,473.9 301.4,534.9 303.4,483.2 303.9,561.9 306.5,483.2 307.8,541.5 309.5,463.8 311.2,609.3 312.9,473.9 314.9,551.7 315.8,483.2 317.5,571.2 318.5,434.9 319.4,541.5 320.8,520.5 322.2,561.9 324.4,483.2 325.6,551.7 327.3,483.2 330.7,561.9 331.6,492.6 332.8,530.9 334.1,483.2 335.8,541.5 337.0,473.9 338.9,536.3 340.9,512.9 341.2,546.6 342.1,507.9 343.4,590.7 344.6,483.2 346.8,571.2 349.4,483.2 350.5,600.9 352.8,502.8 354.4,590.7 355.6,483.2 357.3,561.9 359.5,463.8 360.4,561.9 362.9,512.9 363.8,561.9 365.5,514.8 367.1,561.9 368.3,483.2 369.7,590.7 371.4,502.8 373.1,541.5 374.8,483.2 375.6,542.8 376.5,463.8 377.3,522.0 379.9,512.9 382.4,571.2 383.2,492.6 384.7,539.8 386.1,492.6 386.3,561.9 389.7,483.2 390.0,541.5 391.7,501.0 393.4,551.7 394.3,502.8 396.5,609.3 397.3,473.9 398.5,580.5 400.5,492.6 401.9,551.7 403.2,483.2 405.3,541.5 406.1,483.2 407.5,551.7 409.5,463.8 410.4,541.5 412.1,507.8 413.4,571.2 414.6,463.8 417.1,522.0 418.0,492.6 420.5,561.9 421.4,483.2 422.9,532.9 424.4,434.9 424.7,531.4 426.1,509.6 427.8,551.7 428.2,512.9 429.3,544.2 430.4,473.9 431.6,537.7 432.9,492.6 433.6,561.9 435.5,454.4 436.6,527.1 437.5,492.6 439.4,571.2 439.7,483.2 442.8,541.5 444.4,483.2 446.1,531.4 447.3,483.2 449.9,561.9 450.7,512.9 452.4,561.9 454.9,483.2 456.3,561.9 459.5,463.8 460.5,571.2 462.6,502.8 463.4,551.7 465.1,473.9 467.1,522.0 471.1,463.8 471.4,571.2 472.9,506.0 474.4,541.5 475.3,463.8 477.0,539.8 478.7,512.9 479.5,580.5 482.4,473.9 483.8,551.7 486.6,473.9 487.1,551.7 488.9,512.9 489.4,590.7 491.4,492.6 491.9,561.9 493.9,492.6 496.5,590.7 498.7,492.6 500.1,533.5 501.6,483.2 501.9,541.5 504.1,502.8 505.3,580.5 508.3,483.2 509.2,531.4 510.5,463.8 513.1,580.5 513.4,502.8 514.9,540.3 516.3,454.4 516.8,541.5 520.5,483.2 520.8,580.5 523.6,512.9 524.4,590.7 526.1,492.6 527.5,551.7 529.5,492.6 530.4,571.2 532.6,483.2 534.6,531.4 535.5,512.9 537.1,541.5 538.9,473.9 541.4,531.4 543.1,473.9 545.6,561.9 548.2,492.6 550.7,571.2 551.9,473.9 553.6,551.7 554.1,473.9 555.4,544.3 556.6,528.2 556.9,600.9 559.4,512.1 561.4,580.5 562.2,521.4 564.8,551.7 565.6,483.2 568.2,541.5 569.4,454.4 570.9,548.7 572.4,519.7 573.2,580.5 575.8,502.8 577.5,541.9 579.2,502.8 579.5,561.9 582.6,502.8 583.9,542.8 585.1,523.1 585.4,590.7 588.5,463.8 591.0,531.4 592.4,483.2 594.4,541.5 595.3,519.7 596.3,549.8 597.3,483.2 597.6,541.5 600.4,434.9 602.4,531.4 603.4,492.6 604.9,532.8 606.3,492.6 606.6,561.9 608.9,463.8 610.5,571.2 610.9,506.1 612.1,542.0 613.4,434.9 614.8,541.5 617.3,483.2 618.7,551.7 621.6,483.2 622.8,537.1 624.1,512.9 624.4,561.9 626.6,463.8 628.3,580.5 629.5,445.1 630.6,528.8 631.7,497.7 632.6,541.5 633.8,483.2 635.3,544.4 636.8,509.5 637.1,571.2 639.7,483.2 641.0,551.7 642.8,516.3 645.6,600.9 646.1,512.9 647.6,531.9 649.0,473.9 650.9,531.4 651.2,473.9 653.3,546.9 655.5,463.8 655.8,541.5 658.0,484.1 659.4,571.2 660.8,511.2 662.2,522.0 662.4,445.0 664.4,547.2 666.5,516.3 666.8,551.7 669.5,483.2 669.9,551.7 672.4,473.9 673.2,541.5 675.0,511.2 676.1,561.9 677.1,521.4 678.4,560.0 680.7,492.0" fill="none" stroke="#70ff00" stroke-width="1" stroke-linejoin="round" shape-rendering="crispEdges"/></g>
<g clip-path="url(#bc)"><path d="M99.6 558.1L100.1 578.7M103.3 505.6L104.0 545.5M102.4 535.4L102.7 521.4M103.2 546.9L103.5 594.6M113.2 575.5L114.8 536.9M113.7 556.3L114.1 596.8M120.4 545.4L121.2 580.2M122.6 538.5L123.6 578.1M124.5 581.8L125.1 552.0M126.0 552.0L127.8 625.8M137.1 537.3L138.4 488.7M145.3 536.2L146.1 580.9M146.9 572.8L147.6 525.9M148.2 564.4L150.0 523.4M152.2 547.0L152.5 535.3M153.4 553.7L154.2 604.6M158.5 518.4L160.0 583.4M160.8 585.1L162.2 536.3M160.9 535.0L161.2 548.3M162.8 538.3L164.2 583.1M173.2 556.0L173.4 574.6M177.5 523.0L178.0 556.1M181.4 569.1L182.2 530.8M185.1 535.5L186.0 579.1M186.5 573.4L187.1 535.5M187.6 537.1L188.3 546.5M189.1 541.7L190.2 504.3M188.7 517.5L188.9 539.7M191.9 526.7L192.2 581.5M192.7 576.2L194.4 532.3M195.0 531.5L196.3 574.4M196.6 543.4L199.6 589.0M200.8 586.9L202.3 531.3M206.0 528.6L207.0 589.3M205.6 571.5L206.3 528.0M206.7 519.0L207.6 560.2M210.4 553.8L211.7 464.3M213.1 472.0L213.8 507.9M221.9 507.6L222.6 555.2M229.7 554.1L230.1 474.7M232.0 522.1L233.0 505.6M246.2 541.9L246.3 519.5M249.5 499.5L249.6 529.0M247.9 533.7L248.3 524.4M248.6 523.0L249.3 544.8M250.6 539.0L252.7 515.9M255.8 538.1L257.3 482.6M257.7 480.9L258.8 511.7M259.3 506.6L259.5 493.1M257.8 480.6L258.4 518.6M262.4 489.2L263.0 522.0M263.6 525.4L264.1 494.6M262.5 497.8L263.1 539.8M267.3 498.7L268.6 544.7M274.5 515.8L275.9 477.9M276.7 485.7L277.3 546.8M277.7 475.7L278.8 533.0M279.4 539.9L280.1 507.4M286.1 506.7L286.9 472.1M285.4 472.9L287.4 550.5M298.0 517.7L298.8 551.6M298.5 478.9L299.6 512.7M302.5 531.9L304.2 488.7M312.6 498.7L313.5 534.5M316.2 530.3L316.7 488.2M317.2 505.0L318.3 561.5M316.6 552.5L317.3 460.1M319.7 454.0L320.1 513.7M318.5 539.9L319.5 525.2M320.2 533.4L320.7 547.6M329.3 504.9L331.4 555.1M330.0 540.3L330.5 498.1M332.9 504.2L333.4 518.1M334.2 518.8L334.7 497.1M336.6 492.4L337.4 520.3M341.9 517.2L342.1 533.4M342.3 542.3L342.9 518.5M342.9 548.0L343.3 508.2M344.4 513.3L345.6 561.3M348.6 544.6L350.1 492.1M352.0 514.2L352.9 562.7M360.6 475.2L361.1 531.5M367.1 531.4L367.7 548.2M369.5 492.1L370.5 579.1M371.1 568.4L372.1 517.1M372.7 510.6L373.7 532.6M376.8 523.8L377.2 492.1M379.2 518.7L380.7 513.7M383.7 546.0L384.1 503.2M386.4 537.2L388.5 488.2M389.4 532.5L390.3 512.2M395.9 532.2L397.1 590.2M400.3 547.4L400.8 523.4M407.4 494.2L408.0 528.5M412.6 555.8L413.3 492.3M414.2 477.0L415.4 503.8M416.3 517.1L416.8 500.2M421.8 534.6L422.1 511.6M420.5 487.7L421.7 526.6M422.1 521.5L423.1 459.8M426.9 544.3L427.1 525.8M430.4 534.5L431.2 482.8M433.0 535.7L434.1 475.5M437.1 520.2L437.9 553.1M441.7 501.9L443.2 531.7M445.6 488.9L446.8 521.0M449.1 549.7L449.7 516.1M452.3 528.9L453.1 553.0M451.7 551.5L453.0 512.6M458.5 527.1L460.0 479.1M467.4 502.7L469.8 468.1M472.2 497.6L472.3 546.5M472.5 566.1L473.4 527.5M474.4 516.4L475.1 534.0M476.6 479.9L477.8 529.5M478.6 530.0L479.4 516.9M479.9 528.8L480.4 567.6M480.9 567.4L483.0 487.3M483.6 483.1L484.3 526.3M485.1 543.2L486.5 504.3M487.8 491.2L488.0 522.2M488.5 544.2L489.6 518.9M487.9 527.6L488.2 560.3M490.5 582.5L491.9 515.5M491.1 555.4L492.2 519.0M493.8 524.5L494.9 567.4M495.8 577.2L497.0 522.7M499.2 529.4L500.3 491.4M503.0 539.2L504.3 517.0M503.2 508.1L504.1 567.2M505.5 542.5L506.6 505.9M509.9 482.0L511.6 558.6M514.1 568.6L514.4 510.7M512.7 509.0L513.6 534.2M514.3 513.7L515.1 466.7M519.6 502.2L519.7 549.4M520.2 570.8L521.7 535.9M525.4 505.6L526.0 531.2M526.9 539.1L528.3 500.5M528.6 503.0L529.3 563.0M535.9 524.6L536.3 515.6M534.6 515.1L535.7 534.1M538.6 524.7L539.2 498.4M540.5 527.5L541.5 493.8M547.0 552.8L549.0 496.8M550.1 539.7L550.7 492.3M552.6 543.0L552.9 502.9M555.2 478.0L556.3 539.9M555.7 543.6L555.8 577.4M566.0 533.8L566.4 500.0M570.2 541.8L571.0 526.6M573.6 530.1L574.1 566.5M579.0 531.1L579.9 510.1M580.3 526.3L580.4 545.2M578.9 554.4L580.5 523.0M592.2 505.5L593.3 536.6M593.7 534.5L594.1 525.3M597.7 524.7L598.0 505.6M599.3 516.8L600.9 453.7M601.6 523.6L602.1 503.4M606.0 529.4L606.9 504.5M605.3 499.8L605.6 552.6M612.0 510.0L612.8 531.6M616.7 521.2L617.6 500.7M622.7 490.5L623.7 530.7M624.1 531.4L624.8 518.1M625.1 518.9L625.4 555.5M630.7 454.7L631.2 495.7M631.7 526.7L632.5 504.2M632.8 503.6L633.5 536.3M631.7 537.7L632.5 497.8M636.4 562.6L638.3 495.1M644.7 591.3L644.9 547.6M648.5 490.2L649.7 527.1M652.7 490.8L653.6 522.1M657.2 499.2L658.0 550.2M660.9 548.1L661.3 531.9M661.3 495.2L661.4 453.5M665.9 539.4L667.0 522.7M667.6 526.9L667.7 548.8M668.6 499.0L668.8 545.8M673.7 499.1L674.0 518.8M674.1 518.6L675.1 558.4M677.3 554.3L677.8 533.6M678.6 536.6L678.9 545.6M677.6 554.7L679.2 506.7" fill="none" stroke="#70ff00" stroke-width="1" shape-rendering="crispEdges"/></g>
<g shape-rendering="crispEdges"><line x1="120.5" y1="417.3" x2="120.5" y2="666" stroke="#7fe8ff"/><line x1="198.5" y1="417.3" x2="198.5" y2="666" stroke="#3c96ff"/><line x1="663.5" y1="417.3" x2="663.5" y2="666" stroke="#e01010"/></g>
<path d="M658.500 512.500h10M661 510l5 5M666 510l-5 5" stroke="#e01010" stroke-width="1" fill="none"/>
</svg>
<div class="abs" style="left:10px;top:373px;width:89px;height:24px;background:linear-gradient(90deg,#d4d4d4 0,#cecece 7px,#c0c0c0 12px,#c0c0c0 70px,#9c9c9c 88px,#6a6a6a 89px);box-shadow:inset 0 1px 0 #d4d4d4, inset 0 -1px 0 #858585;"></div>
<div class="abs" style="left:23px;top:377px;width:20px;height:16px;background:#8a8a8a;box-shadow:inset 1px 1px 0 #6c6c6c;"></div>
<div class="abs" style="left:45px;top:377px;width:19px;height:16px;background:#c8c8c8;box-shadow:inset 1px 1px 0 #e6e6e6, inset -1px -1px 0 #909090;"></div>
<div class="abs" style="left:66px;top:377px;width:19px;height:16px;background:#c8c8c8;box-shadow:inset 1px 1px 0 #e6e6e6, inset -1px -1px 0 #909090;"></div>
<svg width="110" height="400"><g fill="none" stroke="#000" stroke-width="1">
<path d="M33.500 379v13M27 385.500h13" shape-rendering="crispEdges"/><circle cx="33.500" cy="385.500" r="1.600" fill="#8a8a8a"/>
<rect x="25" y="379" width="3" height="3" fill="#38f038" stroke="none"/>
<rect x="47" y="379" width="3" height="3" fill="#3a7a3a" stroke="none"/>
<rect x="68" y="379" width="3" height="3" fill="#3a7a3a" stroke="none"/>
<circle cx="56.500" cy="383.200" r="4" fill="#e4e4ff" stroke="#000" stroke-width="1.200"/>
<path d="M54 383.200h5M56.500 380.700v5" stroke="#000" stroke-width="1.400"/>
<path d="M53.500 386.500l-5 5" stroke-width="1.800"/>
<path d="M56 389h5l-2.500 3z" fill="#000" stroke="none"/>
<path d="M70 386l2 4.500h6.500l2-5v-4M72.200 388v-6.500M74.300 386v-6.500M76.400 386v-6.500M78.500 386v-5.500" stroke-width="1.200"/>
</g></svg>

<div class="lbl" style="left:190.500px;top:385px;">Peaks</div>
<div class="abs" style="left:225px;top:375px;width:212px;height:31px;background:#b4b4b4;box-shadow:inset 2px 2px 0 #9a9a9a, inset -2px -2px 0 #d0d0d0;"></div>
<div class="abs" style="left:229px;top:379px;width:68px;height:24px;background:#9e9e9e;"></div>
<div class="abs" style="left:297px;top:379px;width:68px;height:24px;background:#9e9e9e;"></div>
<div class="abs" style="left:365px;top:379px;width:68px;height:24px;background:#adadad;"></div>
<div class="abs" style="left:233px;top:383px;width:60px;height:17px;background:#d6d6d6;"></div>
<div class="abs" style="left:301px;top:383px;width:60px;height:17px;background:#d6d6d6;"></div>
<div class="abs" style="left:369px;top:383px;width:60px;height:17px;background:#c4c4c4;"></div>
<div class="lbl" style="left:234.500px;top:385px;">0.000</div>
<div class="lbl" style="left:302.500px;top:385px;">6.310m</div>
<div class="lbl" style="left:370.500px;top:385px;color:#8c8c8c;">0.000</div>

<div class="abs" style="left:477px;top:372px;width:94px;height:22px;background:linear-gradient(90deg,#d4d4d4 0,#cecece 7px,#c0c0c0 12px,#c0c0c0 80px,#9c9c9c 89px,#707070 94px);box-shadow:inset 0 1px 0 #d4d4d4, inset 0 -1px 0 #858585;"></div>
<div class="lbl" style="left:491.500px;top:376px;">SiPM</div>
<div class="abs" style="left:530px;top:374px;width:28px;height:18px;background:#000;"></div>
<div class="abs" style="left:572px;top:389px;width:133px;height:16px;background:linear-gradient(90deg,#d4d4d4 0,#cecece 7px,#c0c0c0 12px,#c0c0c0 119px,#9c9c9c 128px,#707070 133px);box-shadow:inset 0 -1px 0 #858585;"></div>
<div class="lbl" style="left:588.500px;top:387px;">mcpF - 1 nF</div>
<div class="abs" style="left:662px;top:390px;width:28px;height:13px;background:#000;"></div>
<div class="abs" style="left:576px;top:373px;width:129px;height:17px;background:#bcbcbc;box-shadow:inset 0 1px 0 #9a9a9a;"></div>
<div class="abs" style="left:681px;top:373px;width:7px;height:17px;background:#c4c4c4;box-shadow:inset 0 1px 0 #8c8c8c;"></div>
<div class="abs" style="left:664px;top:373px;width:17px;height:17px;background:linear-gradient(90deg,#cacaca,#b8b8b8 40%,#868686);"></div>
<div class="abs" style="left:576px;top:373px;width:17px;height:17px;background:#c6c6c6;box-shadow:inset 1px 1px 0 #dedede, inset -1px -1px 0 #8a8a8a;"></div>
<div class="abs" style="left:688px;top:373px;width:17px;height:17px;background:#c6c6c6;box-shadow:inset 1px 1px 0 #dedede, inset -1px -1px 0 #8a8a8a;"></div>
<svg width="720" height="410"><path d="M588.500 378v7l-7.500-3.500z M692.500 378v7l7.500-3.500z" fill="#000"/>
<polyline points="532.300,388 540.400,377.500 548.500,388 557.200,377.500" fill="none" stroke="#fff" stroke-width="1.200"/>
<path d="M664.500 398.500L670.500 390.500M674.500 390.500L680.500 398.500L686.500 390.500" fill="none" stroke="#70ff00" stroke-width="1.200"/>
</svg>

</body></html>
